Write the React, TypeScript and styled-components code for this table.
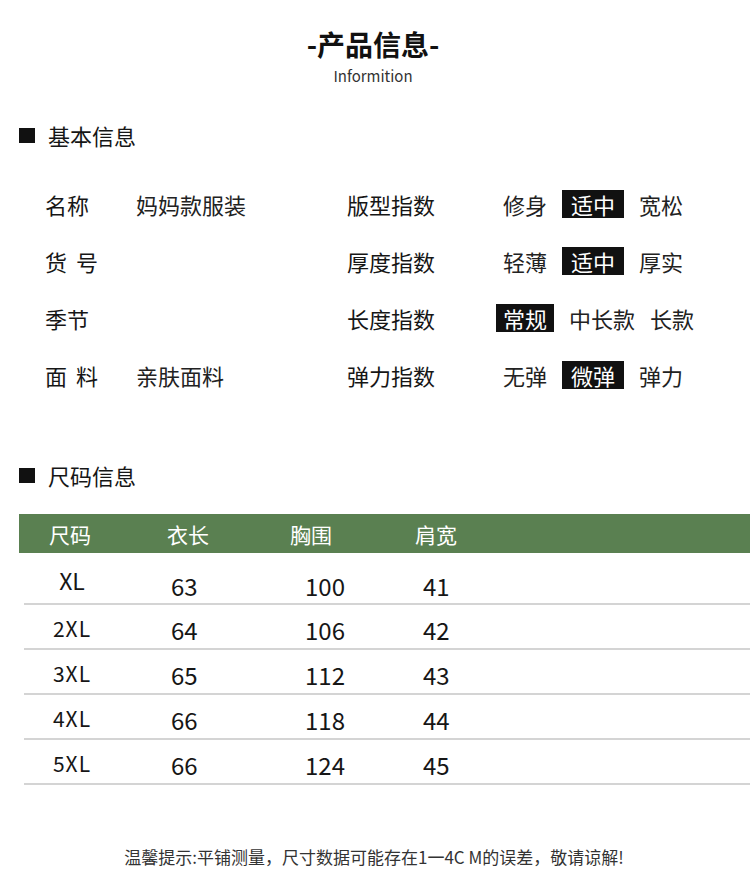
import React from "react";
import styled, { createGlobalStyle } from "styled-components";

const Global = createGlobalStyle`
  html, body { margin: 0; padding: 0; background: #ffffff; }
  body {
    font-family: "Noto Sans CJK SC", "Noto Sans", sans-serif;
    color: #161616;
  }
  * { box-sizing: border-box; }
`;

const Page = styled.div`
  width: 750px;
  height: 888px;
  overflow: hidden;
  background: #fff;
  display: flex;
  flex-direction: column;
`;

const Header = styled.header`
  display: flex;
  flex-direction: column;
  align-items: center;
  padding-top: 24px;
  padding-right: 4px;
`;

const Title = styled.h1`
  margin: 0;
  font-size: 28px;
  line-height: 40px;
  font-weight: 700;
  color: #111;
`;

const Subtitle = styled.div`
  margin-top: 2px;
  font-size: 15px;
  line-height: 20px;
  color: #333;
`;

const SectionTitle = styled.h2<{ $top: number }>`
  margin: ${(p) => p.$top}px 0 0;
  height: 30px;
  display: flex;
  align-items: center;
  padding-left: 19px;
  font-size: 22px;
  font-weight: 400;
  color: #161616;
  &::before {
    content: "";
    width: 16px;
    height: 15px;
    background: #111;
    margin-right: 13px;
  }
`;

const InfoGrid = styled.div`
  margin-top: 25px;
  display: grid;
  grid-template-columns: 302px 1fr;
  padding-left: 45px;
`;

const InfoRow = styled.div`
  height: 57px;
  display: flex;
  align-items: center;
  font-size: 22px;
  line-height: 30px;
`;

const Label = styled.span<{ $w: number }>`
  width: ${(p) => p.$w}px;
  flex: none;
  word-spacing: 4px;
  color: #161616;
`;

const Value = styled.span`
  color: #222;
`;

const Options = styled.div`
  display: flex;
  align-items: center;
  gap: 15px;
`;

const Option = styled.span<{ $active?: boolean }>`
  display: inline-flex;
  align-items: center;
  height: 28px;
  color: ${(p) => (p.$active ? "#fff" : "#222")};
  background: ${(p) => (p.$active ? "#111" : "transparent")};
  padding: ${(p) => (p.$active ? "0 9px" : "0")};
  &:first-child {
    margin-left: ${(p) => (p.$active ? "-7px" : "0")};
    padding: ${(p) => (p.$active ? "0 7px" : "0")};
  }
`;

const Table = styled.div`
  margin: 24px 0 0 19px;
  display: flex;
  flex-direction: column;
`;

const HeadRow = styled.div`
  height: 39px;
  background: #5a8051;
  display: grid;
  grid-template-columns: 118px 123px 125px 1fr;
  align-items: center;
  padding-left: 30px;
  color: #fff;
  font-size: 21px;
  line-height: 28px;
`;

const BodyRow = styled.div<{ $first?: boolean }>`
  margin-left: 5px;
  height: ${(p) => (p.$first ? 52 : 45)}px;
  padding-top: ${(p) => (p.$first ? 15 : 6)}px;
  border-bottom: 2px solid #d4d4d4;
  display: grid;
  grid-template-columns: 147px 134px 118px 1fr;
  align-items: center;
`;

const SizeCell = styled.span<{ $big?: boolean }>`
  padding-right: 51px;
  text-align: center;
  font-size: ${(p) => (p.$big ? 23 : 21)}px;
  letter-spacing: ${(p) => (p.$big ? 0 : 1)}px;
  line-height: 28px;
  margin-top: ${(p) => (p.$big ? -11 : -3)}px;
  color: #161616;
`;

const NumCell = styled.span`
  font-size: 24px;
  line-height: 30px;
  color: #161616;
`;

const Footer = styled.footer`
  margin-top: 60px;
  text-align: center;
  font-size: 17px;
  line-height: 24px;
  color: #333;
  padding-right: 2px;
`;

type Opt = { text: string; active?: boolean };

const leftRows: { label: string; value?: string }[] = [
  { label: "名称", value: "妈妈款服装" },
  { label: "货 号" },
  { label: "季节" },
  { label: "面 料", value: "亲肤面料" },
];

const rightRows: { label: string; options: Opt[] }[] = [
  { label: "版型指数", options: [{ text: "修身" }, { text: "适中", active: true }, { text: "宽松" }] },
  { label: "厚度指数", options: [{ text: "轻薄" }, { text: "适中", active: true }, { text: "厚实" }] },
  { label: "长度指数", options: [{ text: "常规", active: true }, { text: "中长款" }, { text: "长款" }] },
  { label: "弹力指数", options: [{ text: "无弹" }, { text: "微弹", active: true }, { text: "弹力" }] },
];

const sizes = [
  { size: "XL", len: 63, chest: 100, shoulder: 41 },
  { size: "2XL", len: 64, chest: 106, shoulder: 42 },
  { size: "3XL", len: 65, chest: 112, shoulder: 43 },
  { size: "4XL", len: 66, chest: 118, shoulder: 44 },
  { size: "5XL", len: 66, chest: 124, shoulder: 45 },
];

export default function App() {
  return (
    <Page>
      <Global />
      <Header>
        <Title>-产品信息-</Title>
        <Subtitle>Informition</Subtitle>
      </Header>

      <SectionTitle $top={34}>基本信息</SectionTitle>
      <InfoGrid>
        {leftRows.map((l, i) => (
          <React.Fragment key={i}>
            <InfoRow style={{ gridRow: i + 1, gridColumn: 1 }}>
              <Label $w={91}>{l.label}</Label>
              {l.value && <Value>{l.value}</Value>}
            </InfoRow>
            <InfoRow style={{ gridRow: i + 1, gridColumn: 2 }}>
              <Label $w={156}>{rightRows[i].label}</Label>
              <Options>
                {rightRows[i].options.map((o, j) => (
                  <Option key={j} $active={o.active}>
                    {o.text}
                  </Option>
                ))}
              </Options>
            </InfoRow>
          </React.Fragment>
        ))}
      </InfoGrid>

      <SectionTitle $top={57}>尺码信息</SectionTitle>
      <Table>
        <HeadRow>
          <span>尺码</span>
          <span>衣长</span>
          <span>胸围</span>
          <span>肩宽</span>
        </HeadRow>
        {sizes.map((s, i) => (
          <BodyRow key={s.size} $first={i === 0}>
            <SizeCell $big={i === 0}>{s.size}</SizeCell>
            <NumCell>{s.len}</NumCell>
            <NumCell>{s.chest}</NumCell>
            <NumCell>{s.shoulder}</NumCell>
          </BodyRow>
        ))}
      </Table>

      <Footer>温馨提示:平铺测量，尺寸数据可能存在1一4C M的误差，敬请谅解!</Footer>
    </Page>
  );
}
